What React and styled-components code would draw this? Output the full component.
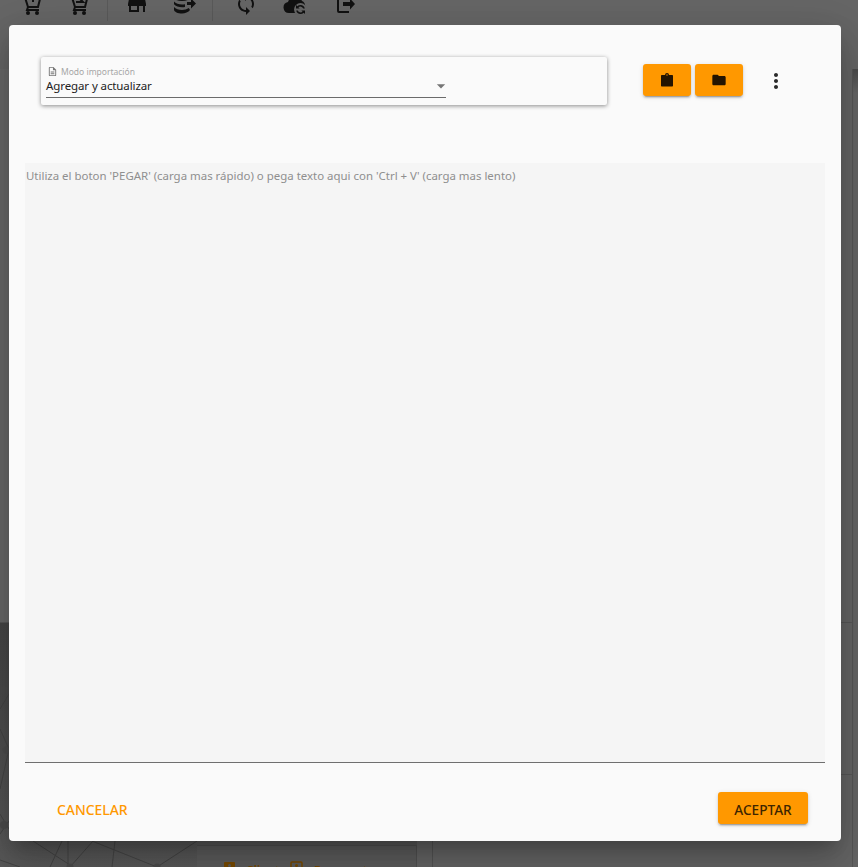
import React from "react";
import styled, { createGlobalStyle } from "styled-components";
import { MdStore, MdSync, MdMoreVert, MdFolder, MdOutlineDescription, MdArrowDropDown } from "react-icons/md";

const Global = createGlobalStyle`
  html, body { margin: 0; padding: 0; height: 100%; overflow: hidden; }
  body { font-family: "Noto Sans", "Open Sans", sans-serif; background: #5c5c5c; }
  #root { height: 100%; }
  * { box-sizing: border-box; }
`;

const Page = styled.div`
  position: relative;
  width: 858px;
  height: 867px;
  overflow: hidden;
  display: flex;
  flex-direction: column;
  background: #5f5f5f;
`;

const Toolbar = styled.header`
  flex: 0 0 69px;
  display: flex;
  align-items: flex-start;
  padding-left: 20px;
  background: #666;
  overflow: hidden;
  color: #111;
`;

const ToolGroup = styled.div`
  display: flex;
  gap: ${(p) => p.$gap}px;
  margin-top: -8px;
  margin-left: ${(p) => p.$lead || 0}px;
`;

const ToolSeparator = styled.div`
  width: 1px;
  height: 21px;
  margin: 0 17px 0 16px;
  background: #5a5a5a;
`;

const Workspace = styled.main`
  flex: 1;
  display: grid;
  grid-template-columns: 197px 220px 1fr;
  background: linear-gradient(180deg, #4c4c4c 0, #666 24px, #666 100%);
`;

const NetworkPane = styled.div`
  background: linear-gradient(180deg, #6a6a6a 0, #6a6a6a 553px, #474747 554px, #5a5a5a 100%);
  svg { display: block; width: 197px; height: 798px; }
`;

const ClientPane = styled.section`
  display: flex;
  flex-direction: column;
  justify-content: flex-end;
  background: #5a5a5a;
  overflow: hidden;
`;

const ClientCard = styled.div`
  height: 22px;
  padding: 15px 0 0 25px;
  background: #5e5e5e;
  border-top: 1px solid #505050;
  border-right: 1px solid #525252;
`;

const ClientTabs = styled.div`
  display: flex;
  align-items: flex-start;
  gap: 3px;
  height: 16px;
  color: #7a4b00;
  font-size: 12px;
  line-height: 16px;
  font-weight: 600;
`;

const ClientTab = styled.span`
  display: inline-flex;
  align-items: flex-start;
  gap: 10px;
  white-space: nowrap;
`;

const TabLabel = styled.span`
  margin-top: 2px;
`;

const SidePane = styled.section`
  display: flex;
  flex-direction: column;
  margin-right: 5px;
  background: #666;
  border-right: 1px solid #575757;
`;

const SideRow = styled.div`
  flex: ${(p) => (p.$h ? `0 0 ${p.$h}px` : "1")};
  border-top: ${(p) => (p.$line ? "1px solid #585858" : "0")};
  border-left: ${(p) => (p.$edge ? "1px solid #555" : "0")};
  margin-left: 15px;
`;

const Dialog = styled.div`
  position: absolute;
  left: 9px;
  top: 25px;
  width: 832px;
  height: 816px;
  display: flex;
  flex-direction: column;
  background: #fafafa;
  border-radius: 4px;
  box-shadow: 0 11px 15px -7px rgba(0,0,0,.2), 0 24px 38px 3px rgba(0,0,0,.14), 0 9px 46px 8px rgba(0,0,0,.12);
`;

const DialogHeader = styled.div`
  flex: 0 0 138px;
  display: flex;
  align-items: flex-start;
  padding: 32px 0 0 32px;
`;

const ModeCard = styled.div`
  flex: 0 0 566px;
  height: 48px;
  padding: 8px 0 0 5px;
  background: #fafafa;
  border-radius: 2px;
  box-shadow: 0 1px 4px rgba(0,0,0,.45);
`;

const ModeField = styled.div`
  position: relative;
  width: 400px;
  height: 33px;
  border-bottom: 1px solid #6b6b6b;
`;

const ModeLabel = styled.div`
  display: flex;
  align-items: center;
  gap: 3px;
  height: 13px;
  padding-left: 1px;
  font-size: 8.5px;
  line-height: 13px;
  color: #a6a6a6;
  svg { color: #777; }
`;

const ModeValue = styled.div`
  font-size: 11.5px;
  letter-spacing: -0.1px;
  line-height: 15px;
  color: #222;
`;

const DropArrow = styled.span`
  position: absolute;
  right: -5px;
  top: 11px;
  display: flex;
  color: #757575;
`;

const HeaderActions = styled.div`
  display: flex;
  align-items: center;
  margin: 7px 0 0 36px;
  gap: 4px;
`;

const IconButton = styled.button`
  width: 48px;
  height: 32px;
  padding: 0;
  border: 0;
  border-radius: 3px;
  display: flex;
  align-items: center;
  justify-content: center;
  background: #ff9800;
  color: #241400;
  box-shadow: 0 3px 1px -2px rgba(0,0,0,.2), 0 2px 2px 0 rgba(0,0,0,.14), 0 1px 5px 0 rgba(0,0,0,.12);
`;

const MenuButton = styled.button`
  width: 24px;
  height: 24px;
  margin: 2px 0 0 17px;
  padding: 0;
  border: 0;
  background: none;
  color: #2a2a2a;
  display: flex;
  align-items: center;
  justify-content: center;
`;

const PasteArea = styled.div`
  flex: 0 0 600px;
  margin: 0 16px;
  padding: 5px 1px;
  background: #f5f5f5;
  border-bottom: 1px solid #6f6f6f;
  font-size: 11.45px;
  line-height: 16px;
  color: #8f8f8f;
`;

const DialogFooter = styled.div`
  flex: 1;
  display: flex;
  align-items: flex-start;
  justify-content: space-between;
  padding: 29px 33px 0 48px;
`;

const CancelButton = styled.button`
  height: 36px;
  margin-top: -1px;
  padding: 0;
  border: 0;
  background: none;
  font: 500 13.9px "Noto Sans", "Open Sans", sans-serif;
  color: #ff9800;
`;

const AcceptButton = styled.button`
  width: 90px;
  height: 32px;
  padding: 2px 0 0;
  border: 0;
  border-radius: 3px;
  background: #ff9800;
  font: 500 13.6px "Noto Sans", "Open Sans", sans-serif;
  color: #3d2500;
  box-shadow: 0 3px 1px -2px rgba(0,0,0,.2), 0 2px 2px 0 rgba(0,0,0,.14), 0 1px 5px 0 rgba(0,0,0,.12);
`;

const Cart = ({ mark }) => (
  <svg width="24" height="24" viewBox="0 0 24 24" fill="none" stroke="currentColor" strokeWidth="2">
    <path d="M5.500 7l2.500 8h10l2-8" />
    <path d="M8 15l-1 3h12" />
    {mark}
    <circle cx="8" cy="21" r="2" fill="currentColor" stroke="none" />
    <circle cx="17" cy="21" r="2" fill="currentColor" stroke="none" />
  </svg>
);

const DbArrow = () => (
  <svg width="24" height="24" viewBox="0 0 24 24" fill="currentColor">
    <ellipse cx="10" cy="6" rx="8" ry="3" />
    <path d="M2 9.500c1.500 2 5 3 8 3 1 0 2-.1 3-.3V15c-1 .2-2 .3-3 .3-3 0-6.500-1-8-3zM2 15c1.500 2 5 3 8 3 2.500 0 5-.6 6.800-1.900L18 18c-1.500 2-5 3.500-8 3.500-4 0-8-1.500-8-4z" />
    <path d="M15 10h4V6.500l5 5-5 5V13h-4z" />
  </svg>
);

const CloudSync = () => (
  <svg width="24" height="24" viewBox="0 0 24 24" fill="currentColor">
    <path d="M6 21a5.500 5.500 0 0 1-1-10.900A7.500 7.500 0 0 1 19 9a5.500 5.500 0 0 1 3 6c-1 6-4 6-6 6z" />
    <circle cx="17.500" cy="17.500" r="6.500" fill="#666" />
    <path d="M17.500 13a4.500 4.500 0 0 1 4.300 3.500h-1.600a3 3 0 0 0-4.800-1.200l1.200 1.200h-3.600v-3.600l1.300 1.300a4.800 4.800 0 0 1 3.200-1.200zM17.500 22a4.500 4.500 0 0 1-4.300-3.500h1.600a3 3 0 0 0 4.800 1.200l-1.200-1.200h3.600v3.600l-1.300-1.300a4.800 4.800 0 0 1-3.200 1.200z" />
  </svg>
);

const ExitIcon = () => (
  <svg width="24" height="24" viewBox="0 0 24 24" fill="currentColor">
    <path d="M7 3h10v2H7v14h10v2H7a2 2 0 0 1-2-2V5a2 2 0 0 1 2-2z" />
    <path d="M11 10h7V6.500l5 5.500-5 5.500V14h-7z" />
  </svg>
);

const ClipboardIcon = () => (
  <svg width="16" height="16" viewBox="0 0 16 16" fill="currentColor">
    <path d="M3 3h3a2 2 0 0 1 4 0h3c.6 0 1 .4 1 1v9.500c0 .6-.4 1-1 1H3c-.6 0-1-.4-1-1V4c0-.6.4-1 1-1z" />
    <circle cx="8" cy="3" r=".7" fill="#ff9800" />
  </svg>
);

const ContactIcon = ({ outlined }) => (
  <svg width="14" height="14" viewBox="0 0 14 14" fill={outlined ? "none" : "currentColor"} stroke="currentColor" strokeWidth={outlined ? 1.500 : 0}>
    <rect x={outlined ? 1 : 2} y="1" width={outlined ? 11 : 11} height="12" rx="1" />
    <circle cx={outlined ? 6.500 : 7.500} cy="4.500" r="1.500" fill={outlined ? "currentColor" : "#5e5e5e"} stroke="none" />
  </svg>
);

const Network = () => (
  <svg viewBox="0 0 197 798" fill="none" stroke="#464646" strokeWidth="1">
    <path d="M0 720L9 680M0 640L9 625M0 660L9 680M0 745L9 760M0 765L9 752" />
    <path d="M62 772L50 798M93 772L70 798M33 772L70 796M115 772L112 798M92 772L157 798M197 772L157 798M68 772L68 798M0 791L20 798" />
    <g fill="#4d4d4d" stroke="none">
      <circle cx="4" cy="621" r="4" />
      <circle cx="6" cy="681" r="3.500" />
      <circle cx="4" cy="756" r="4" />
      <circle cx="70" cy="798" r="3.500" />
      <circle cx="157" cy="798" r="3.500" />
    </g>
  </svg>
);

export default function App() {
  return (
    <Page>
      <Global />
      <Toolbar>
        <ToolGroup $gap={23}>
          <Cart mark={<path d="M13 3v7" />} />
          <Cart mark={<path d="M9 10h7l-3-3" />} />
        </ToolGroup>
        <ToolSeparator />
        <ToolGroup $gap={23}>
          <MdStore size={24} />
          <DbArrow />
        </ToolGroup>
        <ToolSeparator />
        <ToolGroup $gap={25} $lead={4}>
          <MdSync size={24} />
          <CloudSync />
          <ExitIcon />
        </ToolGroup>
      </Toolbar>
      <Workspace>
        <NetworkPane>
          <Network />
        </NetworkPane>
        <ClientPane>
          <ClientCard>
            <ClientTabs>
              <ClientTab>
                <ContactIcon />
                <TabLabel>Cliente</TabLabel>
              </ClientTab>
              <ClientTab>
                <ContactIcon outlined />
                <TabLabel>Respuesta</TabLabel>
              </ClientTab>
            </ClientTabs>
          </ClientCard>
        </ClientPane>
        <SidePane>
          <SideRow $h={553} />
          <SideRow $h={152} $line />
          <SideRow $line $edge />
        </SidePane>
      </Workspace>
      <Dialog>
        <DialogHeader>
          <ModeCard>
            <ModeField>
              <ModeLabel>
                <MdOutlineDescription size={11} />
                Modo importación
              </ModeLabel>
              <ModeValue>Agregar y actualizar</ModeValue>
              <DropArrow>
                <MdArrowDropDown size={20} />
              </DropArrow>
            </ModeField>
          </ModeCard>
          <HeaderActions>
            <IconButton>
              <ClipboardIcon />
            </IconButton>
            <IconButton>
              <MdFolder size={16} />
            </IconButton>
            <MenuButton>
              <MdMoreVert size={24} />
            </MenuButton>
          </HeaderActions>
        </DialogHeader>
        <PasteArea>Utiliza el boton 'PEGAR' (carga mas rápido) o pega texto aqui con 'Ctrl + V' (carga mas lento)</PasteArea>
        <DialogFooter>
          <CancelButton>CANCELAR</CancelButton>
          <AcceptButton>ACEPTAR</AcceptButton>
        </DialogFooter>
      </Dialog>
    </Page>
  );
}
